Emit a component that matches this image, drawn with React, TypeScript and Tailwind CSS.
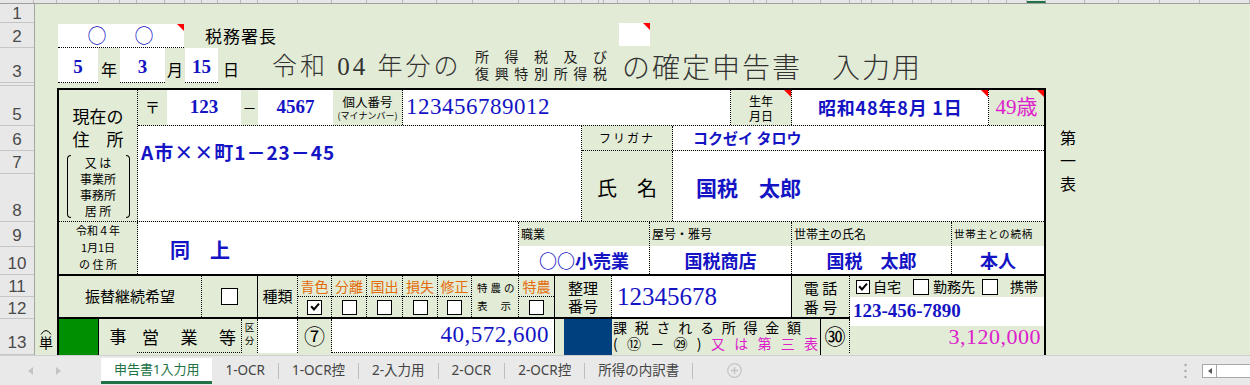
import React from "react";

const JP = "font-['Noto_Sans_CJK_JP',sans-serif]";
const SERIF = "font-['Liberation_Serif','Noto_Sans_CJK_JP',serif]";
const BLUE = "text-[#1414c4]";
const MAG = "text-[#dc20cc]";
const ORANGE = "text-[#e46c0a]";
const DOT = "border-dotted border-black";

function RedTri() {
  return (
    <svg className="absolute top-0 right-0" width="7" height="7" viewBox="0 0 7 7">
      <polygon points="0,0 7,0 7,7" fill="#ff0000" />
    </svg>
  );
}

function Box({ checked = false, className = "" }: { checked?: boolean; className?: string }) {
  return (
    <span className={`inline-flex items-center justify-center bg-white border border-black ${className}`}>
      {checked && (
        <svg viewBox="0 0 12 12" className="w-[10px] h-[10px]">
          <path d="M2.2 6 L4.8 9 L10 2.8" fill="none" stroke="#000" strokeWidth="2.4" strokeLinecap="square" />
        </svg>
      )}
    </span>
  );
}

const colW = [
  "w-[34px]", "w-[23px]", "w-[42px]", "w-[21px]", "w-[17px]", "w-[28px]", "w-[20px]", "w-[17px]", "w-[16px]",
  "w-[23px]", "w-[17px]", "w-[40px]", "w-[34px]", "w-[35px]", "w-[36px]", "w-[34px]", "w-[36px]", "w-[46px]",
  "w-[36px]", "w-[10px]", "w-[17px]", "w-[17px]", "w-[5px]", "w-[14px]", "w-[32px]", "w-[23px]", "w-[18px]",
  "w-[39px]", "w-[24px]", "w-[13px]", "w-[26px]", "w-[28px]", "w-[29px]", "w-[12px]", "w-[10px]", "w-[21px]",
  "w-[20px]", "w-[19px]", "w-[20px]", "w-[20px]", "w-[17px]", "w-[18px]", "w-[20px]", "w-[19px]", "w-[39px]",
  "w-[34px]", "w-[41px]", "w-[40px]", "w-[50px]",
];

const rowHdr = [
  { n: "1", h: "h-[19px]", p: "pb-[1px]" },
  { n: "2", h: "h-[25px]", p: "pb-[3px]" },
  { n: "3", h: "h-[35px]", p: "pb-[3px]" },
  { n: "", h: "h-[3px]", p: "pb-[3px]" },
  { n: "5", h: "h-[40px]", p: "pb-[3px]" },
  { n: "6", h: "h-[25px]", p: "pb-[3px]" },
  { n: "7", h: "h-[23px]", p: "pb-[3px]" },
  { n: "8", h: "h-[48px]", p: "pb-[3px]" },
  { n: "9", h: "h-[25px]", p: "pb-[3px]" },
  { n: "10", h: "h-[28px]", p: "pb-[3px]" },
  { n: "11", h: "h-[22px]", p: "pb-[2px]" },
  { n: "12", h: "h-[22px]", p: "pb-[2px]" },
  { n: "13", h: "h-[36px]", p: "pb-[4px]" },
];

const kinds = [
  { l: "青色", w: "w-[34px]", c: true },
  { l: "分離", w: "w-[35px]", c: false },
  { l: "国出", w: "w-[36px]", c: false },
  { l: "損失", w: "w-[35px]", c: false },
  { l: "修正", w: "w-[34px]", c: false },
];

const jobs = [
  { l: "職業", v: "○○小売業", w: "w-[131px]", lc: "text-[12px]", br: true },
  { l: "屋号・雅号", v: "国税商店", w: "w-[142px]", lc: "text-[12px]", br: true },
  { l: "世帯主の氏名", v: "国税　太郎", w: "w-[160px]", lc: "text-[12px]", br: true },
  { l: "世帯主との続柄", v: "本人", w: "w-[92px]", lc: "text-[10.5px] tracking-[0.8px]", br: false },
];

const tabs = ["1-OCR", "1-OCR控", "2-入力用", "2-OCR", "2-OCR控", "所得の内訳書"];

export default function App() {
  return (
    <div className={`w-[1250px] h-[385px] overflow-hidden flex flex-col bg-[#e2ebd5] text-black ${JP}`}>
      {/* column header strip */}
      <div className="h-[4px] flex bg-[#e6e6e6] border-b border-[#a0a0a0] overflow-hidden shrink-0">
        {colW.map((w, i) => (
          <div
            key={i}
            className={`${w} shrink-0 border-r border-[#b8b8b8] ${i === 43 ? "border-b-2 border-b-[#217346]" : ""}`}
          />
        ))}
      </div>

      {/* body */}
      <div className="flex h-[351px] shrink-0">
        {/* row header */}
        <div className="w-[35px] shrink-0 bg-[#e8e8e8] border-r border-[#a5a5a5] flex flex-col font-['Liberation_Sans',sans-serif] text-[17px] text-[#4a4a4a]">
          {rowHdr.map((r, i) => (
            <div key={i} className={`${r.h} shrink-0 flex items-end justify-center border-b border-[#c6c6c6] overflow-hidden`}>
              <span className={`leading-[15px] ${r.p}`}>{r.n}</span>
            </div>
          ))}
        </div>

        {/* sheet */}
        <div className="flex-1 flex flex-col overflow-hidden">
          <div className="h-[19px] shrink-0" />

          {/* row 2 */}
          <div className="h-[25px] shrink-0 flex">
            <div className="w-[23px] shrink-0" />
            <div className={`relative w-[126px] h-[24px] mt-[1px] bg-white border-b ${DOT} flex items-center pl-[28px] gap-[25px] ${BLUE} text-[19px]`}>
              <span className="w-[22px] text-center">○</span>
              <span className="w-[22px] text-center">○</span>
              <RedTri />
            </div>
            <div className="w-[21px] shrink-0" />
            <div className="w-[414px] shrink-0 flex items-center text-[17px] tracking-[1px] pt-[1px]">税務署長</div>
            <div className="relative w-[31px] h-[23px] bg-white">
              <RedTri />
            </div>
          </div>

          {/* row 3 */}
          <div className="h-[35px] shrink-0 flex">
            <div className="w-[23px] shrink-0" />
            <div className={`w-[40px] shrink-0 bg-white border-b ${DOT} flex items-end justify-center pb-[1px] ${BLUE} ${SERIF} font-bold text-[19px]`}>5</div>
            <div className="w-[22px] shrink-0 flex items-end justify-center pb-[2px] text-[16px]">年</div>
            <div className={`w-[45px] shrink-0 bg-white border-b ${DOT} flex items-end justify-center pb-[1px] ${BLUE} ${SERIF} font-bold text-[19px]`}>3</div>
            <div className="w-[20px] shrink-0 flex items-end justify-center pb-[2px] text-[16px]">月</div>
            <div className={`w-[33px] shrink-0 bg-white border-b ${DOT} flex items-end justify-center pb-[1px] ${BLUE} ${SERIF} font-bold text-[19px]`}>15</div>
            <div className="w-[54px] shrink-0 flex items-end pl-[5px] pb-[2px] text-[16px]">日</div>
            <div className={`w-[203px] shrink-0 flex items-end pb-[1px] text-[25px] leading-[30px] tracking-[3px] text-[#333] font-light ${SERIF}`}>
              令和 04 年分の
            </div>
            <div className="w-[132px] shrink-0 flex flex-col justify-end pb-[1px] text-[14px] leading-[17px] text-[#222]">
              <div className="flex justify-between">
                <span>所</span><span>得</span><span>税</span><span>及</span><span>び</span>
              </div>
              <div className="flex justify-between">
                <span>復</span><span>興</span><span>特</span><span>別</span><span>所</span><span>得</span><span>税</span>
              </div>
            </div>
            <div className="w-[15px] shrink-0" />
            <div className="flex items-end pb-[1px] text-[28px] leading-[32px] tracking-[2px] text-[#333] font-light whitespace-nowrap">
              の確定申告書　入力用
            </div>
          </div>

          <div className="h-[5px] shrink-0" />

          {/* main row */}
          <div className="flex flex-1 min-h-0">
            {/* column A */}
            <div className="w-[22px] shrink-0 flex flex-col items-center pt-[240px]">
              <svg width="12" height="7" viewBox="0 0 12 7">
                <path d="M1 6.5 Q6 -1.5 11 6.5" fill="none" stroke="#000" strokeWidth="1" />
              </svg>
              <span className="text-[14px] leading-[15px]">単</span>
            </div>

            {/* form */}
            <div className="w-[989px] shrink-0 border-x-2 border-t-2 border-black flex flex-col">
              {/* Band A: rows 5-8 */}
              <div className={`flex h-[132px] shrink-0 border-b ${DOT}`}>
                <div className={`w-[79px] shrink-0 border-r ${DOT} flex flex-col items-center`}>
                  <div className="mt-[16px] text-[17px] leading-[20px]">現在の</div>
                  <div className="mt-[3px] text-[17px] leading-[20px]">住　所</div>
                  <div className="mt-[6px] w-[63px] h-[63px] flex">
                    <div className="w-[4px] border-l border-y border-black rounded-l-[6px]" />
                    <div className="flex-1 flex flex-col items-center text-[12px] leading-[16px]">
                      <span>又 は</span>
                      <span>事業所</span>
                      <span>事務所</span>
                      <span>居 所</span>
                    </div>
                    <div className="w-[4px] border-r border-y border-black rounded-r-[6px]" />
                  </div>
                </div>
                <div className="flex-1 flex flex-col">
                  {/* row 5 */}
                  <div className={`flex h-[36px] shrink-0 border-b ${DOT}`}>
                    <div className="w-[29px] shrink-0 flex items-center justify-center text-[15px]">〒</div>
                    <div className={`w-[74px] shrink-0 bg-white flex items-center justify-center ${BLUE} ${SERIF} font-bold text-[19px]`}>123</div>
                    <div className="w-[17px] shrink-0 flex items-center justify-center text-[14px]">－</div>
                    <div className={`w-[75px] shrink-0 bg-white flex items-center justify-center ${BLUE} ${SERIF} font-bold text-[19px]`}>4567</div>
                    <div className={`w-[70px] shrink-0 border-r ${DOT} flex flex-col items-center justify-center gap-[1px]`}>
                      <span className="text-[12.5px] leading-[14px]">個人番号</span>
                      <span className="text-[9px] leading-[11px] whitespace-nowrap">(マイナンバー)</span>
                    </div>
                    <div className={`w-[328px] shrink-0 bg-white border-r ${DOT} flex items-center pl-[3px] ${BLUE} ${SERIF} text-[23px] tracking-[0.5px]`}>
                      123456789012
                    </div>
                    <div className={`relative w-[61px] shrink-0 border-r ${DOT} flex flex-col items-center justify-center text-[12px] leading-[15px]`}>
                      <span>生年</span>
                      <span>月日</span>
                      <RedTri />
                    </div>
                    <div className={`relative w-[197px] shrink-0 bg-white border-r ${DOT} flex items-center pl-[26px] ${BLUE} font-bold text-[18px] tracking-[0.8px] whitespace-nowrap`}>
                      昭和48年8月 1日
                      <RedTri />
                    </div>
                    <div className={`relative flex-1 flex items-center justify-center ${MAG} ${SERIF} text-[21px]`}>
                      49歳
                      <RedTri />
                    </div>
                  </div>
                  {/* rows 6-8 */}
                  <div className="flex flex-1">
                    <div className={`w-[444px] shrink-0 bg-white border-r ${DOT} pt-[14px] pl-[3px] leading-[24px] tracking-[1px] ${BLUE} font-bold text-[19px]`}>
                      A市××町1－23－45
                    </div>
                    <div className="flex-1 flex flex-col">
                      <div className={`h-[25px] shrink-0 flex border-b ${DOT}`}>
                        <div className={`w-[91px] shrink-0 border-r ${DOT} flex items-center justify-center text-[12px] tracking-[2px]`}>フリガナ</div>
                        <div className={`flex-1 bg-white flex items-center pl-[20px] ${BLUE} font-bold text-[15px]`}>コクゼイ タロウ</div>
                      </div>
                      <div className="flex flex-1">
                        <div className={`w-[91px] shrink-0 border-r ${DOT} flex items-center justify-center pt-[4px] text-[20px]`}>氏　名</div>
                        <div className={`flex-1 bg-white flex items-center pl-[23px] pt-[4px] ${BLUE} font-bold text-[21px]`}>国税　太郎</div>
                      </div>
                    </div>
                  </div>
                </div>
              </div>

              {/* Band B: rows 9-10 */}
              <div className="flex h-[54px] shrink-0 border-b-2 border-black">
                <div className={`w-[79px] shrink-0 border-r ${DOT} flex flex-col items-center text-[11px] leading-[17px]`}>
                  <span>令和４年</span>
                  <span>1月1日</span>
                  <span>の 住 所</span>
                </div>
                <div className={`w-[381px] shrink-0 bg-white border-r ${DOT} flex items-center pl-[32px] pt-[4px] ${BLUE} font-bold text-[20px]`}>
                  同　上
                </div>
                {jobs.map((j) => (
                  <div key={j.l} className={`${j.w} shrink-0 flex flex-col ${j.br ? `border-r ${DOT}` : ""}`}>
                    <div className={`h-[24px] shrink-0 flex items-center pl-[2px] whitespace-nowrap ${j.lc}`}>{j.l}</div>
                    <div className={`flex-1 bg-white flex items-center justify-center ${BLUE} font-bold text-[18px]`}>{j.v}</div>
                  </div>
                ))}
              </div>

              {/* Band C: rows 11-12 */}
              <div className="flex h-[43px] shrink-0 border-b-2 border-black">
                <div className={`w-[143px] shrink-0 border-r ${DOT} flex items-center justify-center text-[15px]`}>振替継続希望</div>
                <div className="w-[56px] shrink-0 border-r border-black flex items-center justify-center">
                  <Box className="w-[17px] h-[17px]" />
                </div>
                <div className={`w-[40px] shrink-0 border-r ${DOT} flex items-center justify-center text-[15px]`}>種類</div>
                {kinds.map((k) => (
                  <div key={k.l} className={`${k.w} shrink-0 border-r ${DOT} flex flex-col`}>
                    <div className={`h-[21px] shrink-0 border-b ${DOT} flex items-center justify-center ${ORANGE} text-[14px]`}>{k.l}</div>
                    <div className="flex-1 flex items-center justify-center">
                      <Box checked={k.c} className="w-[15px] h-[15px]" />
                    </div>
                  </div>
                ))}
                <div className={`w-[47px] shrink-0 border-r ${DOT} flex flex-col justify-center pl-[5px] text-[10.5px] leading-[18px]`}>
                  <div className="flex gap-[3px]"><span>特</span><span>農</span><span>の</span></div>
                  <div className="flex gap-[13px]"><span>表</span><span>示</span></div>
                </div>
                <div className="w-[36px] shrink-0 border-r border-black flex flex-col">
                  <div className={`h-[21px] shrink-0 border-b ${DOT} flex items-center justify-center ${ORANGE} text-[14px]`}>特農</div>
                  <div className="flex-1 flex items-center justify-center">
                    <Box className="w-[15px] h-[15px]" />
                  </div>
                </div>
                <div className={`w-[57px] shrink-0 border-r ${DOT} flex flex-col items-center justify-center text-[15px] leading-[18px]`}>
                  <span>整理</span>
                  <span>番号</span>
                </div>
                <div className={`w-[180px] shrink-0 bg-white border-r border-black flex items-center pl-[5px] ${BLUE} ${SERIF} text-[25px]`}>
                  12345678
                </div>
                <div className={`w-[58px] shrink-0 border-r ${DOT} flex flex-col items-center justify-center text-[15px] leading-[19px]`}>
                  <span>電 話</span>
                  <span>番 号</span>
                </div>
                <div className="flex-1 flex flex-col">
                  <div className="h-[21px] shrink-0 flex items-center pl-[6px] text-[14px]">
                    <Box checked className="w-[14px] h-[14px]" />
                    <span className="ml-[3px]">自宅</span>
                    <Box className="w-[16px] h-[16px] ml-[12px]" />
                    <span className="ml-[4px]">勤務先</span>
                    <Box className="w-[16px] h-[16px] ml-[7px]" />
                    <span className="ml-[12px]">携帯</span>
                  </div>
                  <div className={`flex-1 bg-white flex items-center pl-[3px] ${BLUE} ${SERIF} font-bold text-[19px]`}>123-456-7890</div>
                </div>
              </div>

              {/* Band D: row 13 */}
              <div className="flex h-[40px] shrink-0 items-start">
                <div className="w-[40px] h-[40px] shrink-0 bg-[#008f00] border-r border-black" />
                <div className="w-[38px] shrink-0 flex justify-center pt-[4px] text-[17px]">事</div>
                <div className={`w-[105px] h-[34px] shrink-0 border-r border-b ${DOT} flex justify-between items-center px-[5px] pt-[2px] text-[17px]`}>
                  <span>営</span><span>業</span><span>等</span>
                </div>
                <div className={`w-[16px] h-[34px] shrink-0 border-r ${DOT} flex flex-col items-center pt-[2px] text-[9.5px] leading-[13px]`}>
                  <span>区</span>
                  <span>分</span>
                </div>
                <div className={`w-[40px] h-[34px] shrink-0 bg-white border-r ${DOT}`} />
                <div className={`w-[34px] h-[34px] shrink-0 border-r ${DOT} flex items-center justify-center text-[21px]`}>⑦</div>
                <div className={`w-[223px] h-[34px] shrink-0 bg-white border-r border-b border-black [border-bottom-style:dotted] flex items-center justify-end pr-[5px] ${BLUE} ${SERIF} text-[23px] tracking-[0.5px]`}>
                  40,572,600
                </div>
                <div className="w-[9px] shrink-0" />
                <div className="w-[48px] h-[40px] shrink-0 bg-[#00407f]" />
                <div className="w-[209px] h-[40px] shrink-0 border-r border-black flex flex-col pl-[1px] text-[14px] leading-[16px]">
                  <div className="w-[188px] flex justify-between">
                    <span>課</span><span>税</span><span>さ</span><span>れ</span><span>る</span><span>所</span><span>得</span><span>金</span><span>額</span>
                  </div>
                  <div className="w-[205px] flex justify-between">
                    <span>(</span><span>⑫</span><span>－</span><span>㉙</span><span>)</span>
                    <span className={MAG}>又</span><span className={MAG}>は</span><span className={MAG}>第</span><span className={MAG}>三</span><span className={MAG}>表</span>
                  </div>
                </div>
                <div className={`w-[29px] h-[34px] shrink-0 border-r ${DOT} flex items-center justify-center text-[21px]`}>㉚</div>
                <div className={`flex-1 h-[34px] flex items-center justify-end pr-[3px] ${MAG} ${SERIF} text-[22px] tracking-[0.5px]`}>3,120,000</div>
              </div>
            </div>

            {/* right: 第一表 */}
            <div className="flex-1 flex flex-col pl-[14px] pt-[38px] text-[16px] leading-[23px]">
              <span>第</span>
              <span>一</span>
              <span>表</span>
            </div>
          </div>
        </div>
      </div>

      {/* tab bar */}
      <div className="h-[30px] shrink-0 bg-[#e9e9e9] border-t border-[#cfcfcf] flex items-stretch font-['Noto_Sans','Noto_Sans_CJK_JP',sans-serif] text-[13.5px] text-[#444]">
        <div className="w-[101px] shrink-0 flex items-center">
          <svg className="ml-[28px]" width="5" height="8" viewBox="0 0 5 8"><polygon points="5,0 5,8 0,4" fill="#c4c4c4" /></svg>
          <svg className="ml-[23px]" width="5" height="8" viewBox="0 0 5 8"><polygon points="0,0 0,8 5,4" fill="#c4c4c4" /></svg>
        </div>
        <div className="mt-[2px] h-[26px] bg-white border-b-[3px] border-[#217346] px-[13px] flex items-center text-[#217346] text-[13px] whitespace-nowrap">
          申告書1入力用
        </div>
        {tabs.map((t, i) => (
          <div key={t} className="flex items-center">
            {i > 0 && <div className="w-px h-[16px] bg-[#bdbdbd]" />}
            <div className="px-[13px] whitespace-nowrap">{t}</div>
          </div>
        ))}
        <div className="flex items-center">
          <div className="w-px h-[16px] bg-[#bdbdbd]" />
          <svg className="ml-[34px]" width="15" height="15" viewBox="0 0 15 15">
            <circle cx="7.5" cy="7.5" r="6.8" fill="none" stroke="#c4c4c4" strokeWidth="1.2" />
            <path d="M7.5 4 V11 M4 7.5 H11" stroke="#c4c4c4" strokeWidth="1.4" />
          </svg>
        </div>
        <div className="ml-auto flex items-center">
          <svg width="3" height="16" viewBox="0 0 3 16">
            <circle cx="1.5" cy="2" r="1.2" fill="#a8a8a8" />
            <circle cx="1.5" cy="8" r="1.2" fill="#a8a8a8" />
            <circle cx="1.5" cy="14" r="1.2" fill="#a8a8a8" />
          </svg>
          <div className="ml-[15px] w-[48px] h-[14px] bg-white border border-[#a8a8a8] border-r-0 flex items-center">
            <div className="w-[14px] h-full border-r border-[#a8a8a8] flex items-center justify-center">
              <svg width="4" height="6" viewBox="0 0 4 6"><polygon points="4,0 4,6 0,3" fill="#555" /></svg>
            </div>
          </div>
        </div>
      </div>
    </div>
  );
}
